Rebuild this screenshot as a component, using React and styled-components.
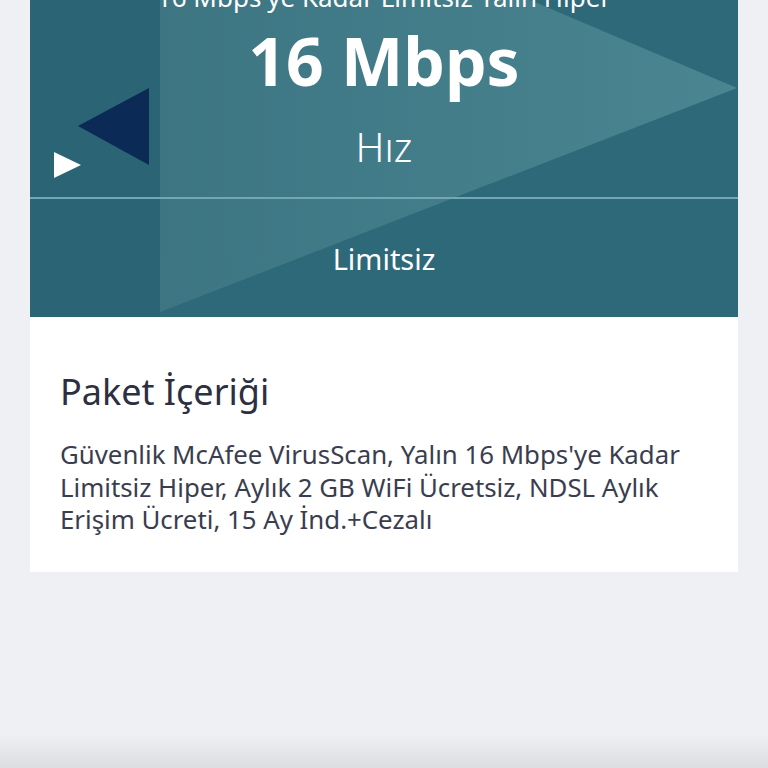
import React from "react";
import styled, { createGlobalStyle } from "styled-components";

const GlobalStyle = createGlobalStyle`
  html, body {
    margin: 0;
    padding: 0;
    background: #eff0f4;
    font-family: "Noto Sans", "Open Sans", sans-serif;
  }
`;

const Page = styled.div`
  height: 768px;
  overflow: hidden;
  display: flex;
  flex-direction: column;
  padding: 0 30px;
  box-sizing: border-box;
`;

const Banner = styled.div`
  position: relative;
  margin-top: -28px;
  height: 345px;
  flex-shrink: 0;
  background: #2b6474;
  color: #ffffff;
  overflow: hidden;
`;

const Shapes = styled.svg`
  position: absolute;
  left: 0;
  top: 0;
  width: 100%;
  height: 100%;
`;

const Content = styled.div`
  position: relative;
  height: 100%;
  display: flex;
  flex-direction: column;
  align-items: center;
`;

const Title = styled.div`
  font-size: 26px;
  line-height: 25px;
  margin-top: 13px;
  white-space: nowrap;
`;

const Speed = styled.div`
  font-size: 66px;
  font-weight: 700;
  line-height: 66px;
  margin-top: 17px;
`;

const Unit = styled.div`
  font-size: 40px;
  font-weight: 300;
  line-height: 40px;
  margin-top: 34px;
`;

const Divider = styled.div`
  width: 100%;
  height: 2px;
  background: #74a7b4;
  margin-top: 30px;
`;

const Bottom = styled.div`
  flex: 1;
  display: flex;
  align-items: center;
  justify-content: center;
`;

const Quota = styled.div`
  font-size: 29px;
  line-height: 29px;
`;

const Details = styled.div`
  background: #ffffff;
  padding: 53px 30px 36px;
  color: #2c2f42;
`;

const Heading = styled.h2`
  margin: 0;
  font-size: 36px;
  font-weight: 400;
  line-height: 44px;
`;

const Body = styled.p`
  margin: 24px 0 0;
  font-size: 25.8px;
  line-height: 32.5px;
  color: #3a3d4f;
`;

const Shade = styled.div`
  margin: auto -30px 0;
  height: 34px;
  background: linear-gradient(to bottom, rgba(220, 221, 226, 0), #dcdde1);
`;

export default function App() {
  return (
    <Page>
      <GlobalStyle />
      <Banner>
        <Shapes viewBox="0 0 708 345" preserveAspectRatio="none">
          <defs>
            <linearGradient id="arrowFill" x1="0" y1="0" x2="1" y2="0">
              <stop offset="0" stopColor="#3d7583" />
              <stop offset="1" stopColor="#4a8591" />
            </linearGradient>
          </defs>
          <rect x="130" y="0" width="578" height="345" fill="#2e6979" />
          <polygon points="130,-129 707,116 130,340" fill="url(#arrowFill)" />
          <polygon points="48,154 119,116 119,193" fill="#0c2a56" />
          <polygon points="24,180 51,193 24,206" fill="#ffffff" />
        </Shapes>
        <Content>
          <Title>16 Mbps'ye Kadar Limitsiz Yalın Hiper</Title>
          <Speed>16 Mbps</Speed>
          <Unit>Hız</Unit>
          <Divider />
          <Bottom>
            <Quota>Limitsiz</Quota>
          </Bottom>
        </Content>
      </Banner>
      <Details>
        <Heading>Paket İçeriği</Heading>
        <Body>
          Güvenlik McAfee VirusScan, Yalın 16 Mbps'ye Kadar Limitsiz Hiper, Aylık 2 GB WiFi Ücretsiz, NDSL Aylık Erişim Ücreti, 15 Ay İnd.+Cezalı
        </Body>
      </Details>
      <Shade />
    </Page>
  );
}
